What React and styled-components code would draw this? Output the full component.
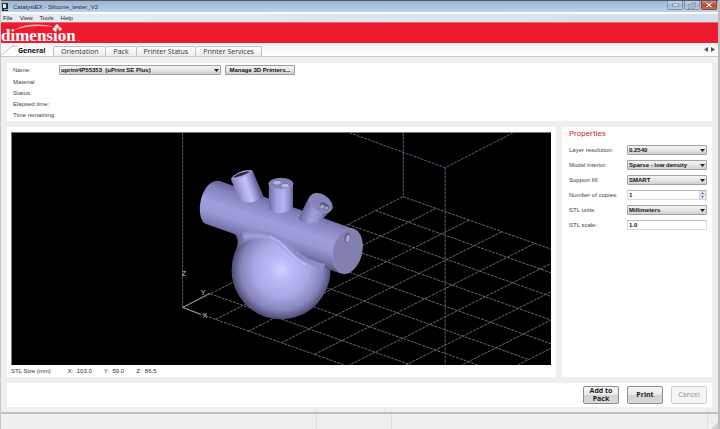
import React from "react";
import styled, { createGlobalStyle } from "styled-components";

const GlobalStyle = createGlobalStyle`
  *, *::before, *::after { box-sizing: border-box; }
  body { margin: 0; background: #b4b4b4; font-family: "Liberation Sans", Arial, sans-serif; font-size: 6px; color: #333; }
  button, input, select { font: inherit; color: inherit; margin: 0; }
`;

const Window = styled.div`
  min-height: 100vh;
  display: flex;
  flex-direction: column;
  border-left: 1px solid #c6c6c6;
  border-right: 2px solid #bdbdbd;
  background: #efefef;
`;

const TitleBar = styled.header`
  display: flex;
  align-items: center;
  gap: 5px;
  height: 12px;
  padding: 0 1px;
  border-top: 1px solid #55585f;
  background: linear-gradient(#9db5d0, #b9d1ea);
`;

const Title = styled.h1`
  flex: 1;
  margin: 0;
  font-size: 6px;
  line-height: 10px;
  font-weight: 400;
  color: #1f2c3c;
`;

const WindowButtons = styled.div`
  display: flex;
  align-self: flex-start;
  gap: 1px;
`;

const WindowButton = styled.button`
  width: 16px;
  height: 9px;
  padding: 0;
  display: flex;
  align-items: center;
  justify-content: center;
  border: 1px solid ${(p) => (p.$close ? "#87453c" : "#8095ad")};
  border-top: 0;
  border-radius: 0 0 2px 2px;
  background: ${(p) => (p.$close ? "linear-gradient(#d79080, #c6432b 55%, #d4694f)" : "linear-gradient(#c4d5e7, #9fb9d4 55%, #b5cce3)")};
`;

const MenuBar = styled.nav`
  display: flex;
  gap: 7px;
  height: 10px;
  padding: 0 2px;
  border-top: 2px solid #fafcfe;
  background: linear-gradient(90deg, #e6ecf4, #d3dfea);
`;

const MenuItem = styled.button`
  padding: 0;
  border: 0;
  background: none;
  font-size: 6px;
  line-height: 6px;
  color: #222;
`;

const Banner = styled.div`
  height: 21px;
  background: #ee1b30;
  border-top: 1px solid #f0626c;
`;

const Logo = styled.svg`
  display: block;
  overflow: visible;
`;

const TabStrip = styled.div`
  display: flex;
  align-items: flex-end;
  height: 14px;
  border-bottom: 1px solid #c6c6c6;
  background: linear-gradient(#f4f4f4, #fff);
`;

const Tab = styled.button`
  height: 10px;
  padding: 0 7px;
  border: 1px solid #c0c0c0;
  border-bottom: 0;
  border-left-width: ${(p) => (p.$first ? "1px" : "0")};
  border-radius: 2px 2px 0 0;
  background: linear-gradient(#fff, #ececec);
  font-family: "Open Sans", "Noto Sans", sans-serif;
  font-size: 7px;
  line-height: 8px;
  color: #333;
`;

const ActiveTab = styled.button`
  display: flex;
  align-items: flex-end;
  height: 13px;
  width: 52px;
  padding: 0;
  border: 0;
  background: none;
  font-family: "Open Sans", "Noto Sans", sans-serif;
  font-size: 7px;
  line-height: 10px;
  font-weight: 700;
  color: #111;
`;

const TabArrows = styled.div`
  display: flex;
  gap: 3px;
  margin-left: auto;
  padding: 0 3px 4px 0;
`;

const ArrowButton = styled.button`
  display: flex;
  padding: 0;
  border: 0;
  background: none;
`;

const Content = styled.main`
  flex: 1;
  display: flex;
  flex-direction: column;
  gap: 6px;
  padding: 6px 6px 5px;
`;

const Panel = styled.section`
  background: #fff;
`;

const PrinterPanel = styled(Panel)`
  display: grid;
  grid-template-columns: 46px 162px 74px;
  grid-template-rows: 12px repeat(4, 11px);
  align-items: center;
  padding: 1px 6px;
`;

const Label = styled.label`
  font-size: 6px;
  line-height: 8px;
  color: #444;
  white-space: nowrap;
`;

const PrinterLabel = styled(Label)`
  grid-column: 1;
`;

const SelectBox = styled.span`
  position: relative;
  display: block;
`;

const SelectField = styled.select`
  display: block;
  width: 100%;
  height: 10px;
  padding: 0 8px 0 1px;
  appearance: none;
  border: 1px solid #a3a3a3;
  border-radius: 1px;
  background: linear-gradient(#f4f4f4, #e6e6e6 50%, #cfcfcf);
  font-size: 6px;
  font-weight: 700;
  line-height: 8px;
  color: #111;
`;

const SelectArrow = styled.svg`
  position: absolute;
  right: 2px;
  top: 4px;
  pointer-events: none;
`;

const ManageButton = styled.button`
  height: 10px;
  margin-left: 4px;
  padding: 0;
  border: 1px solid #9c9c9c;
  border-radius: 1px;
  background: linear-gradient(#f4f4f4, #e6e6e6 50%, #cfcfcf);
  font-size: 6px;
  line-height: 8px;
  font-weight: 700;
  white-space: nowrap;
  color: #111;
`;

const Columns = styled.div`
  flex: 1;
  display: grid;
  grid-template-columns: minmax(0, 1fr) 150px;
  gap: 6px;
`;

const ViewPanel = styled(Panel)`
  display: flex;
  flex-direction: column;
  padding: 5px 5px 0 4px;
`;

const Viewport = styled.svg`
  flex: 1 1 0;
  display: block;
  width: 100%;
  min-height: 220px;
  background: #000;
  border: solid #777;
  border-width: 1px 0 0 1px;
`;

const SizeBar = styled.div`
  display: flex;
  gap: 12px;
  height: 12px;
  font-size: 6px;
  line-height: 12px;
  white-space: pre;
`;

const SizeTitle = styled.span`
  margin-right: 5px;
`;

const PropertiesPanel = styled(Panel)`
  padding: 1px 5px 0 7px;
`;

const Heading = styled.h2`
  margin: 0 0 2px;
  font-family: Roboto, sans-serif;
  font-size: 8px;
  line-height: 12px;
  font-weight: 400;
  color: #c92b2b;
`;

const Property = styled.div`
  display: grid;
  grid-template-columns: 58px minmax(0, 1fr);
  align-items: center;
  height: 15px;
`;

const TextField = styled.input`
  display: block;
  width: 100%;
  height: 10px;
  padding: 0 1px;
  border: 1px solid #dadada;
  border-top-color: #b8b8b8;
  background: #fff;
  font-size: 6px;
  font-weight: 700;
  color: #111;
`;

const Stepper = styled.span`
  position: absolute;
  right: 1px;
  top: 1px;
  width: 7px;
  height: 8px;
  display: flex;
  flex-direction: column;
`;

const StepButton = styled.button`
  flex: 1;
  min-height: 0;
  display: flex;
  align-items: center;
  justify-content: center;
  padding: 0;
  border: 1px solid #d2dae6;
  background: #edf2f9;
`;

const ActionPanel = styled(Panel)`
  display: flex;
  justify-content: flex-end;
  align-items: center;
  gap: 8px;
  height: 24px;
  padding-right: 5px;
`;

const ActionButton = styled.button`
  width: 36px;
  height: 18px;
  padding: 0;
  border: 1px solid ${(p) => (p.disabled ? "#cfcfcf" : "#8e8e8e")};
  border-radius: 2px;
  background: ${(p) => (p.disabled ? "#f5f5f5" : "linear-gradient(#f6f6f6, #e9e9e9 50%, #d2d2d2 52%, #dadada)")};
  font-family: "Open Sans", "Noto Sans", sans-serif;
  font-size: 7px;
  line-height: 8px;
  font-weight: ${(p) => (p.disabled ? 400 : 700)};
  color: ${(p) => (p.disabled ? "#929292" : "#222")};
`;

const ButtonLine = styled.span`
  display: block;
`;

const StatusBar = styled.footer`
  display: grid;
  grid-template-columns: 316px 75px 1fr 10px;
  height: 17px;
  border-top: 2px solid #c0c0c0;
  background: #efefef;
`;

const StatusCell = styled.span`
  display: flex;
  align-items: flex-end;
  justify-content: flex-end;
  border-right: ${(p) => (p.$last ? "0" : "1px solid #dedede")};
`;

const GRID = [0, 1, 2, 3, 4, 5, 6, 7, 8];
const ORIGIN = [183, 307.3];
const STEP_X = [33, 11.7];
const STEP_Y = [27.6, -13.9];
const gridPoint = (i, j) => [
  ORIGIN[0] + i * STEP_X[0] + j * STEP_Y[0],
  ORIGIN[1] + i * STEP_X[1] + j * STEP_Y[1],
];

function GridLine({ from, to }) {
  return <line x1={from[0]} y1={from[1]} x2={to[0]} y2={to[1]} />;
}

function ModelView() {
  return (
    <Viewport viewBox="12 132 540 233" preserveAspectRatio="xMidYMid slice" role="img" aria-label="Model preview">
      <defs>
        <radialGradient id="ball" gradientUnits="userSpaceOnUse" cx="282" cy="269" r="50">
          <stop offset="0" stopColor="#d3d2ff" />
          <stop offset=".2" stopColor="#bcbbfa" />
          <stop offset=".55" stopColor="#a9a8e6" />
          <stop offset=".82" stopColor="#8584bb" />
          <stop offset="1" stopColor="#4b4a70" />
        </radialGradient>
        <linearGradient id="tube" gradientUnits="userSpaceOnUse" x1="286" y1="203" x2="271" y2="249">
          <stop offset="0" stopColor="#6665a0" />
          <stop offset=".15" stopColor="#8483be" />
          <stop offset=".45" stopColor="#9f9edd" />
          <stop offset=".65" stopColor="#9a99d6" />
          <stop offset=".88" stopColor="#7776ac" />
          <stop offset="1" stopColor="#57567f" />
        </linearGradient>
        <linearGradient id="neck" gradientUnits="userSpaceOnUse" x1="236" y1="0" x2="262" y2="0">
          <stop offset="0" stopColor="#5b5a86" />
          <stop offset=".4" stopColor="#8887be" />
          <stop offset="1" stopColor="#9f9edd" />
        </linearGradient>
        <linearGradient id="portA" gradientUnits="userSpaceOnUse" x1="234" y1="192" x2="258" y2="184">
          <stop offset="0" stopColor="#6f6ea2" />
          <stop offset=".3" stopColor="#a3a2dd" />
          <stop offset=".58" stopColor="#c4c3ff" />
          <stop offset=".8" stopColor="#9796cf" />
          <stop offset="1" stopColor="#605f91" />
        </linearGradient>
        <linearGradient id="portB" gradientUnits="userSpaceOnUse" x1="269" y1="0" x2="294" y2="0">
          <stop offset="0" stopColor="#6c6b9e" />
          <stop offset=".3" stopColor="#a09fdf" />
          <stop offset=".6" stopColor="#b3b2f3" />
          <stop offset=".85" stopColor="#8d8cc4" />
          <stop offset="1" stopColor="#5d5c8c" />
        </linearGradient>
        <linearGradient id="portC" gradientUnits="userSpaceOnUse" x1="303" y1="208" x2="327" y2="218">
          <stop offset="0" stopColor="#66659a" />
          <stop offset=".45" stopColor="#a09fe0" />
          <stop offset=".7" stopColor="#9493ce" />
          <stop offset="1" stopColor="#575683" />
        </linearGradient>
      </defs>
      <rect x="12" y="132" width="540" height="233" fill="#000" />
      <g stroke="#68686c" strokeWidth="1" strokeDasharray="3 1">
        {GRID.map((n) => (
          <GridLine key={"x" + n} from={gridPoint(0, n)} to={gridPoint(8, n)} />
        ))}
        {GRID.map((n) => (
          <GridLine key={"y" + n} from={gridPoint(n, 0)} to={gridPoint(n, 8)} />
        ))}
      </g>
      <g fill="none" stroke="#5a597c" strokeWidth="1" strokeDasharray="3 1">
        <path d="M183 132V307M404 132V196M350 132L446 167L516 131" />
        <path d="M446 167V365" />
      </g>
      <path d="M183 307L210 293M183 307L201 314" stroke="#999" strokeWidth="1" />
      <g fill="#c8c8c8" fontFamily="Liberation Sans, sans-serif" fontSize="7">
        <text x="182" y="276">Z</text>
        <text x="201" y="295">Y</text>
        <text x="203" y="318">X</text>
      </g>

      <circle cx="281.500" cy="269.500" r="49.500" fill="url(#ball)" />
      <path d="M232 231C238 235 240 241 236.500 249C242 242 251 238 262 238V230Z" fill="url(#neck)" />
      <path d="M221 180.500L353 228C360 232 358 270 341 273L322 266C306 261 296 253 287 244C275 234 252 232 239 235L205 223C194 213 203 176 221 180.500Z" fill="url(#tube)" />
      <path d="M243 235C256 229 275 233 288 245C299 256 309 263 325 266" fill="none" stroke="#8e8dca" strokeWidth="5" />
      <path d="M244 237C256 232 272 236 283 245C293 254 299 262 311 266" fill="none" stroke="#a5a4e2" strokeWidth="4" opacity=".7" />
      <path d="M270 236C278 239 284 244 289 250C294 256 299 261 306 264" fill="none" stroke="#c4c3fb" strokeWidth="1.500" opacity=".75" strokeLinecap="round" />

      <path d="M231.500 179L253 170L264 196C262 199 250 204 241 201C238 197 235 187 231.500 179Z" fill="url(#portA)" />
      <path d="M231.500 179C232 173 249 167 253 170.500C251 174 236 180 231.500 179Z" fill="#a09fd2" />
      <path d="M233 177C238 172 247 170 251 171C247 173 238 177 233 177Z" fill="#292841" />

      <path d="M269.300 183V209C274 214 285 214 293.500 208V183Z" fill="url(#portB)" />
      <ellipse cx="281.400" cy="183" rx="12.100" ry="5.300" fill="#8180b6" stroke="#9998cf" strokeWidth=".7" />
      <ellipse cx="277.500" cy="181.500" rx="4" ry="2.400" fill="#b9b8ec" />
      <path d="M273.500 181C276 179 280 179 281.500 181" fill="none" stroke="#62618e" />
      <ellipse cx="285.700" cy="184.500" rx="4" ry="2.400" fill="#b9b8ec" />
      <path d="M281.800 184C284 182 288 182 289.500 184" fill="none" stroke="#62618e" />

      <path d="M310 196L299 218C302 224 314 224 321 221L333 208Z" fill="url(#portC)" />
      <ellipse cx="321.500" cy="202.500" rx="12.500" ry="8.300" transform="rotate(34 321.500 202.500)" fill="#8584b9" stroke="#9796cb" strokeWidth=".6" />
      <ellipse cx="325" cy="205.500" rx="5" ry="3" transform="rotate(32 325 205.500)" fill="#595884" />
      <ellipse cx="323" cy="206" rx="2" ry="2" fill="#a3a2d6" />
      <ellipse cx="327" cy="207.500" rx="2" ry="1.500" fill="#a09fd2" />

      <ellipse cx="348.200" cy="250.500" rx="14.300" ry="23" transform="rotate(13 348.200 250.500)" fill="#8180ae" stroke="#9291c3" strokeWidth=".7" />
      <ellipse cx="348" cy="237" rx="3" ry="5" transform="rotate(13 348 237)" fill="#656490" />
      <ellipse cx="348.500" cy="238" rx="1.800" ry="3.500" transform="rotate(13 348.500 238)" fill="#aaa9df" />
    </Viewport>
  );
}

function Arrow({ direction }) {
  const d = direction === "left" ? "M4 0V5L0 2.500Z" : "M0 0V5L4 2.500Z";
  return (
    <svg width="4" height="5" viewBox="0 0 4 5" aria-hidden="true">
      <path d={d} fill="#555" />
    </svg>
  );
}

function Select({ id, value }) {
  return (
    <SelectBox>
      <SelectField id={id} defaultValue={value}>
        <option value={value}>{value}</option>
      </SelectField>
      <SelectArrow width="5" height="3" viewBox="0 0 5 3" aria-hidden="true">
        <path d="M0 0H5L2.500 3Z" fill="#222" />
      </SelectArrow>
    </SelectBox>
  );
}

function PropertyRow({ id, label, children }) {
  return (
    <Property>
      <Label htmlFor={id}>{label}</Label>
      {children}
    </Property>
  );
}

export default function App() {
  return (
    <>
      <GlobalStyle />
      <Window>
        <TitleBar>
          <svg width="6" height="8" viewBox="0 0 6 8" aria-hidden="true">
            <path d="M0 0H6V8H0Z" fill="#252e3a" />
            <path d="M1 1H4V5H1Z" fill="#dce6ef" />
            <path d="M2 6H6V7H2Z" fill="#9baab8" />
          </svg>
          <Title>CatalystEX - Silicone_tester_V2</Title>
          <WindowButtons>
            <WindowButton aria-label="Minimize">
              <svg width="7" height="4" viewBox="0 0 7 4"><rect x=".5" y="1" width="6" height="2" fill="#fff" stroke="#596b80" strokeWidth=".6" /></svg>
            </WindowButton>
            <WindowButton aria-label="Restore">
              <svg width="8" height="7" viewBox="0 0 8 7" fill="none"><path d="M3 1H7V4H5M1 3H5V6H1Z" stroke="#596b80" strokeWidth="1.600" /><path d="M3 1H7V4H5M1 3H5V6H1Z" stroke="#fff" strokeWidth=".7" /></svg>
            </WindowButton>
            <WindowButton $close aria-label="Close">
              <svg width="8" height="6" viewBox="0 0 8 6"><path d="M1.500 .8L6.500 5.200M6.500 .8L1.500 5.200" stroke="#5e3832" strokeWidth="2.500" /><path d="M1.500 .8L6.500 5.200M6.500 .8L1.500 5.200" stroke="#fff" strokeWidth="1.400" /></svg>
            </WindowButton>
          </WindowButtons>
        </TitleBar>
        <MenuBar>
          <MenuItem>File</MenuItem>
          <MenuItem>View</MenuItem>
          <MenuItem>Tools</MenuItem>
          <MenuItem>Help</MenuItem>
        </MenuBar>
        <Banner>
          <Logo width="80" height="20" viewBox="0 0 80 20" role="img" aria-label="dimension">
            <text x="0" y="18" fill="#fff" fontFamily="Liberation Serif, serif" fontSize="17" fontWeight="700">dimension</text>
            <path d="M13 7C24 1 39 0 52 4C38 2 25 3 13 7Z" fill="#fbb9b4" />
            <path d="M56 1L58.500 3.500L56 6L53.500 3.500ZM59 4L61 6L59 8L57 6ZM53.500 4L55.500 6L53.500 8L51.500 6Z" fill="#fff" />
            <circle cx="78" cy="17.500" r=".6" fill="#f9a4a8" />
          </Logo>
        </Banner>
        <TabStrip role="tablist">
          <ActiveTab role="tab" aria-selected="true">
            <svg width="17" height="13" viewBox="0 0 17 13" fill="none" aria-hidden="true">
              <path d="M0 12C5 11 7 3 13 3H17" stroke="#c4c4c4" />
            </svg>
            General
          </ActiveTab>
          <Tab role="tab" $first>Orientation</Tab>
          <Tab role="tab">Pack</Tab>
          <Tab role="tab">Printer Status</Tab>
          <Tab role="tab">Printer Services</Tab>
          <TabArrows>
            <ArrowButton aria-label="Previous tab"><Arrow direction="left" /></ArrowButton>
            <ArrowButton aria-label="Next tab"><Arrow direction="right" /></ArrowButton>
          </TabArrows>
        </TabStrip>
        <Content>
          <PrinterPanel>
            <PrinterLabel htmlFor="printer">Name:</PrinterLabel>
            <Select id="printer" value={"uprint4P55353\u00a0 (uPrint SE Plus)"} />
            <ManageButton>Manage 3D Printers...</ManageButton>
            <PrinterLabel as="span">Material:</PrinterLabel>
            <PrinterLabel as="span">Status:</PrinterLabel>
            <PrinterLabel as="span">Elapsed time:</PrinterLabel>
            <PrinterLabel as="span">Time remaining:</PrinterLabel>
          </PrinterPanel>
          <Columns>
            <ViewPanel>
              <ModelView />
              <SizeBar>
                <SizeTitle>STL Size (mm)</SizeTitle>
                <span>X:  103.0</span>
                <span>Y:  59.0</span>
                <span>Z:  86.5</span>
              </SizeBar>
            </ViewPanel>
            <PropertiesPanel>
              <Heading>Properties</Heading>
              <PropertyRow id="layer" label="Layer resolution:"><Select id="layer" value="0.2540" /></PropertyRow>
              <PropertyRow id="interior" label="Model interior:"><Select id="interior" value="Sparse - low density" /></PropertyRow>
              <PropertyRow id="support" label="Support fill:"><Select id="support" value="SMART" /></PropertyRow>
              <PropertyRow id="copies" label="Number of copies:">
                <SelectBox>
                  <TextField id="copies" defaultValue="1" />
                  <Stepper>
                    <StepButton aria-label="More copies"><svg width="3" height="2" viewBox="0 0 3 2"><path d="M0 2L1.500 0L3 2Z" fill="#526fa0" /></svg></StepButton>
                    <StepButton aria-label="Fewer copies"><svg width="3" height="2" viewBox="0 0 3 2"><path d="M0 0L1.500 2L3 0Z" fill="#526fa0" /></svg></StepButton>
                  </Stepper>
                </SelectBox>
              </PropertyRow>
              <PropertyRow id="units" label="STL units:"><Select id="units" value="Millimeters" /></PropertyRow>
              <PropertyRow id="scale" label="STL scale:"><TextField id="scale" defaultValue="1.0" /></PropertyRow>
            </PropertiesPanel>
          </Columns>
          <ActionPanel>
            <ActionButton>
              <ButtonLine>Add to</ButtonLine>
              <ButtonLine>Pack</ButtonLine>
            </ActionButton>
            <ActionButton>Print</ActionButton>
            <ActionButton disabled>Cancel</ActionButton>
          </ActionPanel>
        </Content>
        <StatusBar>
          <StatusCell />
          <StatusCell />
          <StatusCell />
          <StatusCell $last>
            <svg width="7" height="7" viewBox="0 0 7 7" aria-hidden="true"><path d="M7 0V7H0Z" fill="#d2d2d2" /></svg>
          </StatusCell>
        </StatusBar>
      </Window>
    </>
  );
}
